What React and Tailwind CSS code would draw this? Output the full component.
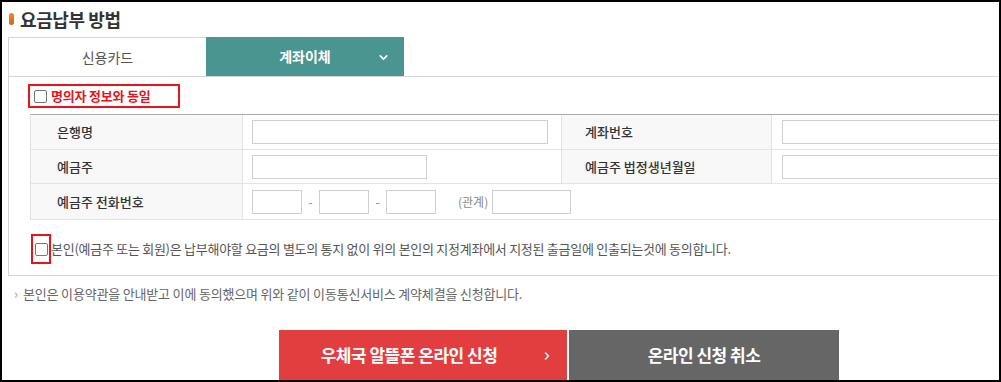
import React from 'react';
import { ChevronDown, ChevronRight } from 'lucide-react';

const Box = ({ className = '' }) => (
  <span className={`block h-[24px] border border-[#cfcfcf] bg-white ${className}`} />
);

const Check = () => (
  <span className="inline-block h-[13px] w-[13px] shrink-0 rounded-[2px] border border-[#767676] bg-white" />
);

const Label = ({ children }) => (
  <div className="flex items-center bg-[#f8f8f8] pl-[26px] text-[13px] font-medium text-[#333]">
    {children}
  </div>
);

export default function App() {
  return (
    <div className="h-[382px] w-[1001px] overflow-hidden border-2 border-black bg-white font-['Noto_Sans_CJK_KR',sans-serif]">
      <div className="mt-[6px] flex h-[22px] items-center gap-[6px] pl-[7px]">
        <span className="h-[12px] w-[5px] rounded-full bg-gradient-to-b from-[#f08a2c] to-[#d8601a]" />
        <h2 className="text-[18px] font-bold tracking-[-0.4px] text-[#333]">요금납부 방법</h2>
      </div>

      <div className="ml-[6px] mt-[7px] w-[1100px] border-b border-l border-[#d5d5d5]">
        <div className="flex h-[40px] border-b border-[#d5d5d5]">
          <div className="flex w-[197px] items-center justify-center border-t border-[#d5d5d5] text-[14px] text-[#555]">
            신용카드
          </div>
          <div className="relative flex w-[198px] items-center justify-center bg-[#4a958f] text-[14px] font-bold text-white">
            계좌이체
            <ChevronDown size={13} strokeWidth={3} className="absolute right-[14px] top-[14px]" />
          </div>
        </div>

        <div className="ml-[19px] mt-[7px] flex h-[24px] w-[152px] items-center gap-[4px] border-2 border-[#e8141b] pl-[4px]">
          <Check />
          <span className="text-[13px] font-bold tracking-[-0.2px] text-[#e8141b]">명의자 정보와 동일</span>
        </div>

        <div className="ml-[21px] mt-[6px] w-[1060px] border-t border-[#a9a9a9] border-l border-l-[#e3e3e3]">
          <div className="grid h-[35px] grid-cols-[211px_319px_210px_1fr] border-b border-[#e3e3e3]">
            <Label>은행명</Label>
            <div className="flex items-center border-l border-[#e3e3e3] pl-[9px]">
              <Box className="w-[296px]" />
            </div>
            <div className="flex items-center border-l border-[#e3e3e3] bg-[#f8f8f8] pl-[23px] text-[13px] font-medium text-[#333]">
              계좌번호
            </div>
            <div className="flex items-center border-l border-[#e3e3e3] pl-[10px]">
              <Box className="w-[260px]" />
            </div>
          </div>
          <div className="grid h-[34px] grid-cols-[211px_319px_210px_1fr] border-b border-[#e3e3e3]">
            <Label>예금주</Label>
            <div className="flex items-center border-l border-[#e3e3e3] pl-[9px]">
              <Box className="w-[175px]" />
            </div>
            <div className="flex items-center border-l border-[#e3e3e3] bg-[#f8f8f8] pl-[23px] text-[13px] font-medium text-[#333]">
              예금주 법정생년월일
            </div>
            <div className="flex items-center border-l border-[#e3e3e3] pl-[10px]">
              <Box className="w-[260px]" />
            </div>
          </div>
          <div className="grid h-[36px] grid-cols-[211px_1fr] border-b border-[#e3e3e3]">
            <Label>예금주 전화번호</Label>
            <div className="flex items-center border-l border-[#e3e3e3] pl-[9px] text-[12px] text-[#888]">
              <Box className="w-[50px]" />
              <span className="w-[17px] text-center">-</span>
              <Box className="w-[50px]" />
              <span className="w-[17px] text-center">-</span>
              <Box className="w-[50px]" />
              <span className="ml-[22px] mr-[4px]">(관계)</span>
              <Box className="w-[79px]" />
            </div>
          </div>
        </div>

        <div className="ml-[22px] mt-[14px] flex items-center pb-[11px]">
          <span className="flex h-[30px] w-[20px] items-center justify-center border-2 border-[#e8141b]">
            <Check />
          </span>
          <span className="text-[13px] tracking-[-0.27px] text-[#555]">
            본인(예금주 또는 회원)은 납부해야할 요금의 별도의 통지 없이 위의 본인의 지정계좌에서 지정된 출금일에 인출되는것에 동의합니다.
          </span>
        </div>
      </div>

      <p className="ml-[12px] mt-[8px] flex items-center gap-[5px] text-[13px] tracking-[-0.18px] text-[#666]">
        <span className="text-[13px] font-bold text-[#eba67a]">›</span>
        본인은 이용약관을 안내받고 이에 동의했으며 위와 같이 이동통신서비스 계약체결을 신청합니다.
      </p>

      <div className="ml-[277px] mt-[26px] flex gap-[2px]">
        <button className="relative flex h-[51px] w-[288px] items-center justify-center bg-[#e23e40] pr-[28px] text-[17px] font-bold tracking-[-0.5px] text-white">
          우체국 알뜰폰 온라인 신청
          <ChevronRight size={12} strokeWidth={3} className="absolute right-[14px] top-[20px]" />
        </button>
        <button className="flex h-[51px] w-[270px] items-center justify-center bg-[#666] text-[17px] font-bold tracking-[-0.5px] text-white">
          온라인 신청 취소
        </button>
      </div>
    </div>
  );
}
